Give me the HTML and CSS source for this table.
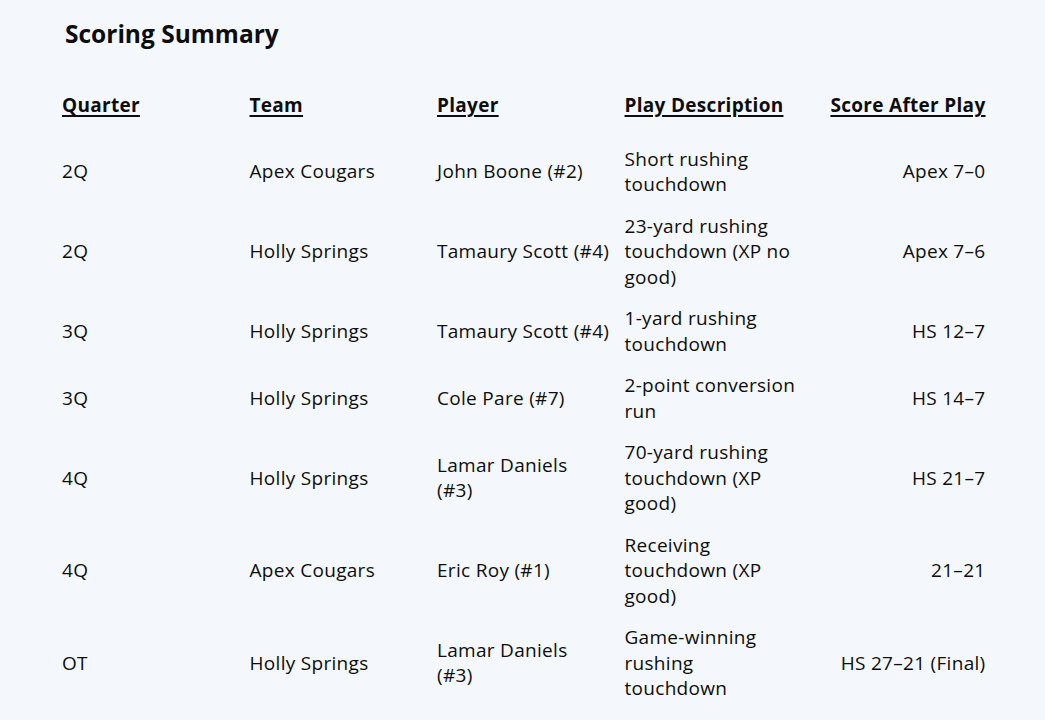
FILE: index.html
```html
<!DOCTYPE html>
<html lang="en">
<head>
<meta charset="utf-8">
<title>Scoring Summary</title>
<link rel="stylesheet" href="styles.css">
</head>
<body>
<main class="page">
  <h1 class="title">Scoring Summary</h1>
  <table class="scores">
    <thead>
      <tr>
        <th>Quarter</th>
        <th>Team</th>
        <th>Player</th>
        <th>Play Description</th>
        <th class="num">Score After Play</th>
      </tr>
    </thead>
    <tbody>
      <tr><td>2Q</td><td>Apex Cougars</td><td>John Boone (#2)</td><td>Short rushing touchdown</td><td class="num">Apex 7–0</td></tr>
      <tr><td>2Q</td><td>Holly Springs</td><td>Tamaury Scott (#4)</td><td>23-yard rushing touchdown (XP no good)</td><td class="num">Apex 7–6</td></tr>
      <tr><td>3Q</td><td>Holly Springs</td><td>Tamaury Scott (#4)</td><td>1-yard rushing touchdown</td><td class="num">HS 12–7</td></tr>
      <tr><td>3Q</td><td>Holly Springs</td><td>Cole Pare (#7)</td><td>2-point conversion run</td><td class="num">HS 14–7</td></tr>
      <tr><td>4Q</td><td>Holly Springs</td><td>Lamar Daniels<br>(#3)</td><td>70-yard rushing touchdown (XP good)</td><td class="num">HS 21–7</td></tr>
      <tr><td>4Q</td><td>Apex Cougars</td><td>Eric Roy (#1)</td><td>Receiving touchdown (XP good)</td><td class="num">21–21</td></tr>
      <tr><td>OT</td><td>Holly Springs</td><td>Lamar Daniels<br>(#3)</td><td>Game-winning rushing touchdown</td><td class="num">HS 27–21 (Final)</td></tr>
    </tbody>
  </table>
</main>
</body>
</html>
```

FILE: styles.css
```css
html, body {
  margin: 0;
  padding: 0;
  background: #f4f8fc;
}

body {
  font-family: "Open Sans", "Noto Sans", sans-serif;
  color: #0d0d0d;
}

.page {
  padding: 18px 52px 0 55px;
}

.title {
  margin: 0 0 35px 10px;
  font-size: 24.5px;
  line-height: 32px;
  font-weight: 700;
}

.scores {
  width: 937.5px;
  table-layout: fixed;
  border-collapse: collapse;
  font-size: 19px;
  letter-spacing: 0.3px;
  line-height: 25.5px;
}

.scores th,
.scores td {
  padding: 8px 7px;
  text-align: left;
  vertical-align: middle;
}

.scores th {
  font-weight: 700;
  padding-bottom: 20px;
  text-decoration: underline;
  text-decoration-thickness: 2px;
  text-underline-offset: 3px;
}

.scores .num {
  text-align: right;
}
```
